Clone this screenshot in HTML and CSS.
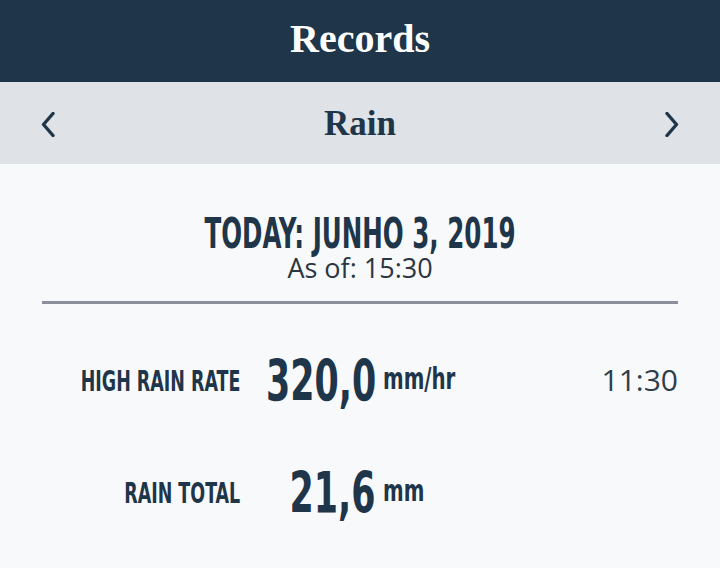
FILE: index.html
```html
<!DOCTYPE html>
<html lang="en">
<head>
    <meta charset="UTF-8">
    <meta name="viewport" content="width=device-width, initial-scale=1.0">
    <title>Records</title>
    <link rel="stylesheet" href="styles.css">
</head>
<body>
    <header class="topbar">
        <h1>Records</h1>
    </header>
    <nav class="picker">
        <button class="arrow" aria-label="Previous">
            <svg width="14" height="25" viewBox="0 0 14 25"><path d="M12 1.5 L2.5 12.5 L12 23.5" /></svg>
        </button>
        <h2>Rain</h2>
        <button class="arrow" aria-label="Next">
            <svg width="14" height="25" viewBox="0 0 14 25"><path d="M2 1.5 L11.5 12.5 L2 23.5" /></svg>
        </button>
    </nav>
    <main class="content">
        <div class="day">
            <h3 class="day-title"><span class="cond">TODAY: JUNHO 3, 2019</span></h3>
            <p class="as-of">As of: 15:30</p>
        </div>
        <hr class="divider">
        <div class="records">
            <span class="label"><span class="cond">HIGH RAIN RATE</span></span>
            <span class="value"><span class="cond">320,0</span></span>
            <span class="unit"><span class="cond">mm/hr</span></span>
            <span class="time">11:30</span>

            <span class="label"><span class="cond">RAIN TOTAL</span></span>
            <span class="value"><span class="cond">21,6</span></span>
            <span class="unit"><span class="cond">mm</span></span>
            <span class="time"></span>
        </div>
    </main>
</body>
</html>
```

FILE: styles.css
```css
* { margin: 0; padding: 0; box-sizing: border-box; }

body {
    background: #f8f9fa;
    color: #1f3549;
    font-family: 'Open Sans', sans-serif;
}

.topbar {
    height: 82px;
    background: #1f3549;
    display: flex;
    align-items: center;
    justify-content: center;
    padding-bottom: 6px;
}

.topbar h1 {
    font-family: 'Liberation Serif', serif;
    font-size: 40px;
    font-weight: 700;
    color: #fff;
}

.picker {
    height: 82px;
    background: #dfe3e7;
    display: flex;
    align-items: center;
    justify-content: space-between;
    padding: 2px 41px 0;
}

.picker h2 {
    font-family: 'Liberation Serif', serif;
    font-size: 35px;
    font-weight: 700;
    color: #1f3549;
}

.arrow {
    background: none;
    border: none;
    display: flex;
}

.arrow path {
    fill: none;
    stroke: #1f3549;
    stroke-width: 3.4;
    stroke-linecap: round;
    stroke-linejoin: round;
}

.content {
    padding: 47px 42px 0;
}

/* condensed headline font, squeezed more to get the narrow look */
.cond {
    display: inline-block;
    font-family: 'DejaVu Sans Condensed', 'DejaVu Sans', sans-serif;
    font-stretch: condensed;
    font-weight: 700;
    white-space: nowrap;
}

.day { text-align: center; }

.day-title {
    font-size: 43px;
    line-height: 42px;
}
.day-title .cond { transform: scaleX(0.635); }

.as-of {
    font-size: 27px;
    line-height: 26px;
    margin-top: 1px;
    color: #2a3642;
}

.divider {
    border: none;
    height: 3px;
    background: #8a9097;
    margin-top: 20px;
}

.records {
    display: grid;
    grid-template-columns: 198px 136px auto 1fr;
    grid-auto-rows: 112px;
    align-items: center;
    margin-top: 20px;
}

.label { justify-self: end; font-size: 29px; line-height: 1; }
.label .cond { transform: scaleX(0.67); transform-origin: right center; }

.value { justify-self: end; font-size: 57px; line-height: 1; }
.value .cond { transform: scaleX(0.68); transform-origin: right center; }

.unit { padding-left: 7px; font-size: 31px; line-height: 1; margin-top: -4px; }
.unit .cond { transform: scaleX(0.71); transform-origin: left center; }

.time {
    justify-self: end;
    font-size: 30px;
    line-height: 1;
    color: #2d3e4c;
}
```
